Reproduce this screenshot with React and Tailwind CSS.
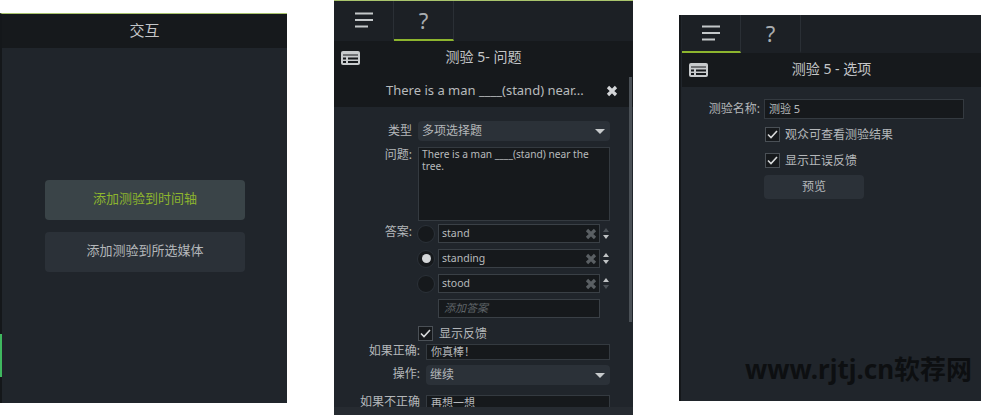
const font = 'font-["Noto_Sans","Noto_Sans_CJK_SC",sans-serif]'

function MenuIcon() {
  return (
    <svg width="20" height="16" viewBox="0 0 20 16" className="text-[#c4c8ca]">
      <path d="M1 1.5h18M1 8h18M1 14.5h13" stroke="currentColor" strokeWidth="2" fill="none" />
    </svg>
  )
}

function PanelIcon() {
  return (
    <svg width="19" height="14" viewBox="0 0 19 14">
      <rect width="19" height="14" rx="2" fill="#c8cbcd" />
      <path d="M2 3.5h15v1H2zM2 6.5h3v2H2zM7 6.5h10v2H7zM2 10h3v2H2zM7 10h10v2H7z" fill="#16191c" />
    </svg>
  )
}

function CloseIcon({ className }) {
  return (
    <svg width="12" height="12" viewBox="0 0 12 12" className={className}>
      <path d="M2 2l8 8M10 2l-8 8" stroke="currentColor" strokeWidth="3.2" fill="none" />
    </svg>
  )
}

function Caret() {
  return <div className="w-0 h-0 border-x-[5px] border-x-transparent border-t-[5px] border-t-[#c8cbcd]" />
}

function Checkbox() {
  return (
    <div className="w-[15px] h-[15px] shrink-0 bg-[#16191c] border border-[#4a5056] flex items-center justify-center">
      <svg width="11" height="9" viewBox="0 0 11 9">
        <path d="M1 4.5l3 3 6-6.5" stroke="#d8dadb" strokeWidth="1.6" fill="none" />
      </svg>
    </div>
  )
}

function Tabs({ active, height, firstWidth }) {
  return (
    <div className={`flex bg-[#1c2025] shrink-0 ${height}`}>
      {['menu', 'help'].map((tab, i) => (
        <div
          key={tab}
          className={`${i === 0 ? firstWidth : 'w-[60px]'} flex items-center justify-center border-r border-[#2a2f35] border-b-2 ${active === tab ? 'border-b-[#8db52e]' : 'border-b-transparent'}`}
        >
          {tab === 'menu' ? <MenuIcon /> : <span className="text-[22px] leading-none text-[#a9adb0]">?</span>}
        </div>
      ))}
    </div>
  )
}

function TitleBar({ title }) {
  return (
    <div className="h-[34px] shrink-0 bg-[#16191c] flex items-center pl-[7px] pr-[26px]">
      <PanelIcon />
      <div className="flex-1 text-center text-sm text-[#c4c6c8] pb-[2px]">{title}</div>
    </div>
  )
}

function Label({ width, className = '', children }) {
  return <div className={`${width} shrink-0 text-right text-xs text-[#b4b7ba] leading-4 ${className}`}>{children}</div>
}

function Select({ value, className }) {
  return (
    <div className={`flex items-center justify-between bg-[#2b3138] rounded-sm pl-1 pr-[5px] text-xs text-[#b4b7ba] ${className}`}>
      {value}
      <Caret />
    </div>
  )
}

function Answer({ text, selected, upDim, downDim }) {
  return (
    <div className="flex items-center h-[19px]">
      <div className="w-[18px] h-[18px] rounded-full bg-[#16191c] border border-[#2b3138] flex items-center justify-center shrink-0">
        {selected && <div className="w-[9px] h-[9px] rounded-full bg-[#d4d6d8]" />}
      </div>
      <div className="ml-[3px] w-[162px] h-[19px] bg-[#16191c] border border-[#3a4046] flex items-center justify-between pl-[3px] pr-[2px] text-[10.5px] text-[#b8bbbd]">
        {text}
        <CloseIcon className="text-[#5a5f63]" />
      </div>
      <div className="ml-[3px] flex flex-col gap-[3px]">
        <div className={`w-0 h-0 border-x-[3px] border-x-transparent border-b-4 ${upDim ? 'border-b-[#4c5258]' : 'border-b-[#c0c3c5]'}`} />
        <div className={`w-0 h-0 border-x-[3px] border-x-transparent border-t-4 ${downDim ? 'border-t-[#4c5258]' : 'border-t-[#c0c3c5]'}`} />
      </div>
    </div>
  )
}

function InteractionPanel() {
  return (
    <div className="relative mt-[13px] w-[287px] h-[390px] bg-[#20252b] border-t border-[#a9c46c] border-l-2 border-l-[#14171a] flex flex-col">
      <div className="h-[34px] bg-[#16191c] flex items-center justify-center text-[15px] text-[#c4c6c8] pb-[2px]">交互</div>
      <div className="pt-[132px] pl-[43px] flex flex-col gap-3">
        <div className="w-[200px] h-10 rounded-sm bg-[#3a4448] flex items-center justify-center text-[13px] text-[#8db52e] pb-[2px]">添加测验到时间轴</div>
        <div className="w-[200px] h-10 rounded-sm bg-[#2b3138] flex items-center justify-center text-[13px] text-[#b4b7ba] pb-[2px]">添加测验到所选媒体</div>
      </div>
      <div className="absolute -left-[2px] top-[320px] w-[2px] h-[43px] bg-[#3fb85f]" />
    </div>
  )
}

function QuestionPanel() {
  return (
    <div className="relative ml-[47px] w-[299px] h-[415px] overflow-hidden bg-[#20252b] border-t border-[#a9c46c] flex flex-col">
      <Tabs active="help" height="h-10" firstWidth="w-[60px]" />
      <TitleBar title="测验 5- 问题" />
      <div className="h-8 shrink-0 bg-[#16191c] flex items-center justify-between pl-[52px] pr-[15px] text-[13px] text-[#b8bbbd]">
        <span>There is a man ____(stand) near...</span>
        <CloseIcon className="text-[#d4d6d8]" />
      </div>
      <div className="pt-[14px] pr-[23px] flex flex-col">
        <div className="flex items-center gap-[6px] h-5">
          <Label width="w-[78px]">类型</Label>
          <Select value="多项选择题" className="flex-1 h-5" />
        </div>
        <div className="flex gap-[6px] mt-[6px]">
          <Label width="w-[78px]">问题:</Label>
          <div className="flex-1 h-[74px] bg-[#16191c] border border-[#343a40] px-[3px] text-[10.2px] leading-[12px] text-[#b8bbbd]">
            There is a man ____(stand) near the tree.
          </div>
        </div>
        <div className="flex gap-[5px] mt-[3px]">
          <Label width="w-[78px]">答案:</Label>
          <div className="flex flex-col gap-[6px]">
            <Answer text="stand" upDim />
            <Answer text="standing" selected />
            <Answer text="stood" downDim />
            <div className="ml-[21px] w-[162px] h-[19px] bg-[#16191c] border border-[#3a4046] pl-[5px] flex items-center text-[11px] italic text-[#5f6468]">添加答案</div>
          </div>
        </div>
        <div className="flex items-center gap-[6px] mt-[8px] ml-[84px] h-[15px]">
          <Checkbox />
          <span className="text-xs text-[#b4b7ba]">显示反馈</span>
        </div>
        <div className="flex items-center gap-[6px] mt-[3px] h-4">
          <Label width="w-[86px]" className="pb-[3px]">如果正确:</Label>
          <div className="flex-1 h-4 bg-[#16191c] border border-[#343a40] pl-1 flex items-center text-[11px] text-[#b4b7ba]">你真棒！</div>
        </div>
        <div className="flex items-center gap-[6px] mt-[5px] h-5">
          <Label width="w-[86px]" className="pb-[2px]">操作:</Label>
          <Select value="继续" className="flex-1 h-5" />
        </div>
        <div className="flex items-center gap-[6px] mt-[10px] h-4">
          <Label width="w-[86px]" className="pb-[2px]">如果不正确</Label>
          <div className="flex-1 h-4 bg-[#16191c] border border-[#343a40] pl-1 flex items-center text-[11px] text-[#b4b7ba]">再想一想</div>
        </div>
      </div>
      {/* scrollbar + footer strip */}
      <div className="absolute top-[76px] right-[1px] w-[3px] h-[245px] bg-[#4a5056]" />
      <div className="absolute bottom-0 inset-x-0 h-2 bg-[#262b31]" />
    </div>
  )
}

function OptionsPanel() {
  return (
    <div className="relative ml-[46px] mt-[15px] flex-1 h-[386px] bg-[#20252b] border-l-2 border-l-[#14171a] pl-px flex flex-col">
      <Tabs active="menu" height="h-[38px]" firstWidth="w-[59px]" />
      <TitleBar title="测验 5 - 选项" />
      <div className="pt-3 flex flex-col">
        <div className="flex items-center gap-1">
          <Label width="w-[78px]">测验名称:</Label>
          <div className="w-[200px] h-5 bg-[#16191c] border border-[#343a40] pl-1 flex items-center text-[11px] text-[#b8bbbd]">测验 5</div>
        </div>
        <div className="flex items-center gap-[5px] ml-[83px] mt-[8px] h-[15px]">
          <Checkbox />
          <span className="text-xs text-[#b4b7ba]">观众可查看测验结果</span>
        </div>
        <div className="flex items-center gap-[5px] ml-[83px] mt-[11px] h-[15px]">
          <Checkbox />
          <span className="text-xs text-[#b4b7ba]">显示正误反馈</span>
        </div>
        <div className="ml-[82px] mt-[7px] w-[100px] h-6 bg-[#2b3138] rounded-sm flex items-center justify-center text-xs text-[#b4b7ba]">预览</div>
      </div>
    </div>
  )
}

export default function App() {
  return (
    <div className={`relative flex items-start w-[981px] h-[415px] overflow-hidden bg-white ${font}`}>
      <InteractionPanel />
      <QuestionPanel />
      <OptionsPanel />
      {/* watermark */}
      <div className="absolute left-[745px] top-[351px] text-[26px] leading-9 font-bold text-[#0d0f11] whitespace-nowrap">www.rjtj.cn软荐网</div>
    </div>
  )
}
